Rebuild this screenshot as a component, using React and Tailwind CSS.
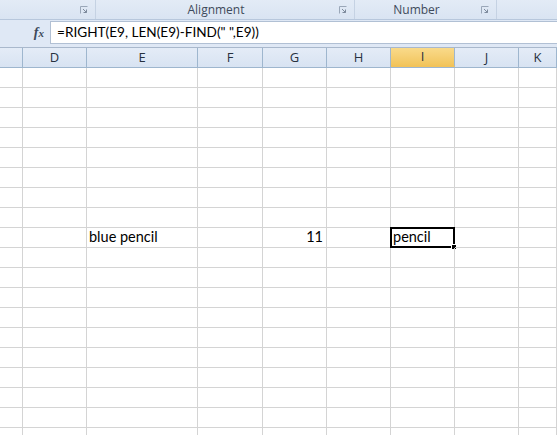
import React from 'react'

const COLS = [
  { key: 'C', label: '', w: 'w-[23px]' },
  { key: 'D', label: 'D', w: 'w-[64px]' },
  { key: 'E', label: 'E', w: 'w-[111px]' },
  { key: 'F', label: 'F', w: 'w-[65px]' },
  { key: 'G', label: 'G', w: 'w-[64px]' },
  { key: 'H', label: 'H', w: 'w-[64px]' },
  { key: 'I', label: 'I', w: 'w-[64px]' },
  { key: 'J', label: 'J', w: 'w-[64px]' },
  { key: 'K', label: 'K', w: 'flex-1' },
]

const DATA = {
  9: { E: { text: 'blue pencil' }, G: { text: '11', right: true }, I: { text: 'pencil', active: true } },
}

function Launcher() {
  return (
    <svg width="8" height="8" viewBox="0 0 8 8" className="shrink-0">
      <path d="M0.5 7.5 V0.5 H7.5" fill="none" stroke="#9aa7b8" strokeWidth="1" />
      <path d="M3 3 L6.5 6.5 M6.5 3.5 V6.5 H3.5" fill="none" stroke="#7d8a9c" strokeWidth="1" />
    </svg>
  )
}

function RibbonGroup({ label, w }) {
  return (
    <div className={`${w} relative flex h-full items-center justify-center border-r border-[#c5d2e3] pr-[18px]`}>
      <span className="text-[12px] text-[#3e4a5b]">{label}</span>
      <div className="absolute right-[7px] top-[6px]">
        <Launcher />
      </div>
    </div>
  )
}

export default function App() {
  const rows = Array.from({ length: 19 }, (_, i) => i + 1)
  return (
    <div className="h-[435px] w-[557px] overflow-hidden bg-white" style={{ fontFamily: '"Open Sans", "Noto Sans", sans-serif' }}>
      {/* ribbon group labels */}
      <div className="flex h-[20px] border-b border-[#b7c7dc] bg-gradient-to-b from-[#e3ebf6] to-[#d9e4f2]">
        <RibbonGroup label="" w="w-[96px]" />
        <RibbonGroup label="Alignment" w="w-[259px]" />
        <RibbonGroup label="Number" w="w-[142px]" />
        <div className="flex-1" />
      </div>

      {/* formula bar */}
      <div className="flex h-[27px] bg-[#dfe8f5] pt-[1px]">
        <div className="flex h-[23px] w-[50px] items-center justify-end pr-[6px]">
          <span className="text-[14px] font-bold italic text-[#3d4a5c]" style={{ fontFamily: '"Liberation Serif", serif' }}>f<span className="text-[11px]">x</span></span>
        </div>
        <div className="flex h-[23px] flex-1 items-center border-y border-l border-[#b1c0d4] bg-white pl-[6px]">
          <span className="text-[13.6px] text-black" style={{ fontFamily: 'Lato, sans-serif' }}>=RIGHT(E9, LEN(E9)-FIND(" ",E9))</span>
        </div>
      </div>

      {/* column headers */}
      <div className="flex h-[21px] border-t border-[#a9b8cc] border-b border-b-[#9eb6ce]">
        {COLS.map((c) => (
          <div
            key={c.key}
            className={`${c.w} flex items-center justify-center border-r border-[#9eb6ce] text-[13px] text-[#27313f] ${
              c.key === 'I'
                ? 'bg-gradient-to-b from-[#f9da8a] to-[#f2c55c] border-b-2 border-b-[#f2c35a]'
                : 'bg-gradient-to-b from-[#e4ecf7] to-[#d8e3f2]'
            }`}
          >
            {c.label}
          </div>
        ))}
      </div>

      {/* grid */}
      {rows.map((r) => (
        <div key={r} className="flex h-[20px]">
          {COLS.map((c) => {
            const cell = DATA[r]?.[c.key]
            return (
              <div
                key={c.key}
                className={`${c.w} relative flex items-end border-r border-b border-[#d4d4d4] pb-[1px] text-[14.5px] leading-[18px] text-black ${
                  cell?.right ? 'justify-end pr-[3px]' : 'pl-[2px]'
                }`}
                style={{ fontFamily: 'Lato, sans-serif' }}
              >
                {cell && <span>{cell.text}</span>}
                {cell?.active && (
                  <div className="absolute -left-[1px] -top-[1px] -right-[1px] -bottom-[1px] border-2 border-black">
                    <div className="absolute -bottom-[4px] -right-[4px] h-[6px] w-[6px] border border-white bg-black" />
                  </div>
                )}
              </div>
            )
          })}
        </div>
      ))}
    </div>
  )
}
